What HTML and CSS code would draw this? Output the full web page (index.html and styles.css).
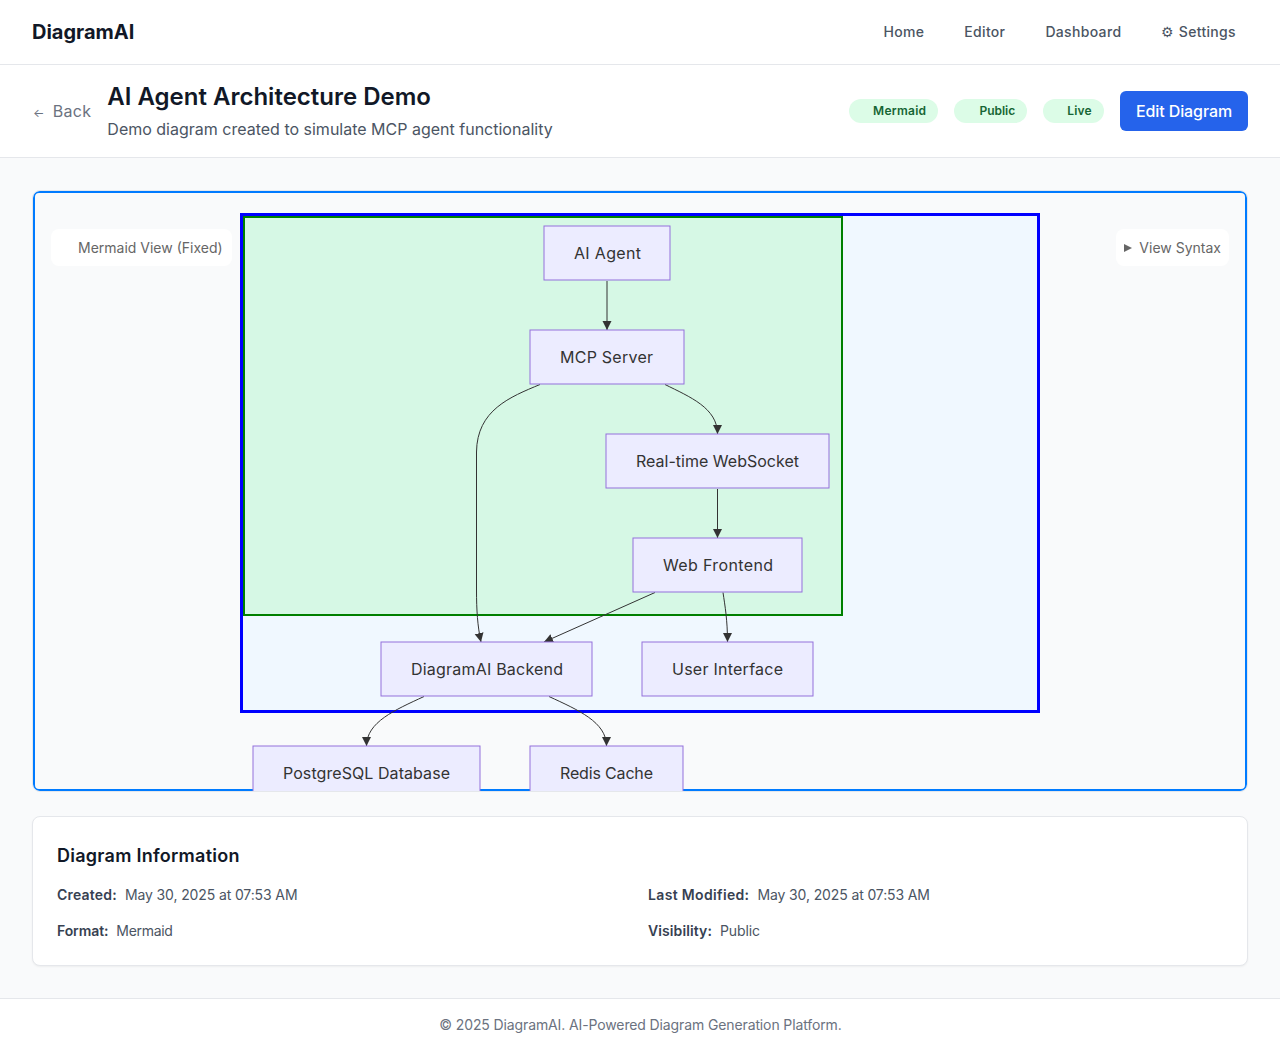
FILE: index.html
```html
<!DOCTYPE html>
<html lang="en">
<head>
<meta charset="utf-8">
<title>AI Agent Architecture Demo - DiagramAI</title>
<link rel="stylesheet" href="styles.css">
</head>
<body>
<header class="topbar">
  <a class="logo" href="#">DiagramAI</a>
  <nav class="nav">
    <a href="#">Home</a>
    <a href="#">Editor</a>
    <a href="#">Dashboard</a>
    <a href="#"><span class="gear">⚙</span> Settings</a>
  </nav>
</header>
<section class="subheader">
  <div class="title-group">
    <a class="back" href="#"><span class="arrow">←</span>Back</a>
    <div>
      <h1>AI Agent Architecture Demo</h1>
      <p>Demo diagram created to simulate MCP agent functionality</p>
    </div>
  </div>
  <div class="actions">
    <span class="badge badge-mermaid">Mermaid</span>
    <span class="badge badge-public">Public</span>
    <span class="badge badge-live">Live</span>
    <a class="edit" href="#">Edit Diagram</a>
  </div>
</section>
<main class="main">
  <section class="diagram-card">
    <div class="diagram-frame"></div>
    <svg class="diagram" viewBox="33 191 1214 600" width="1214" height="600" xmlns="http://www.w3.org/2000/svg">
      <defs>
        <marker id="tip" markerUnits="userSpaceOnUse" markerWidth="10" markerHeight="10" refX="9" refY="5" orient="auto">
          <path d="M0,0.5 L9,5 L0,9.5 Z" class="tip"/>
        </marker>
      </defs>
      <rect class="outer" x="241.5" y="214.5" width="797" height="497"/>
      <rect class="inner" x="244" y="217" width="598" height="398"/>
      <g class="edges">
        <path marker-end="url(#tip)" d="M607,281 V330"/>
        <path marker-end="url(#tip)" d="M540,384.500 C510,397 477,410 476.500,452 L476.500,590 C476.500,610 477.500,626 481,642"/>
        <path marker-end="url(#tip)" d="M665,384.500 C690,397 717.500,408 717.500,434"/>
        <path marker-end="url(#tip)" d="M717.500,489 V538"/>
        <path marker-end="url(#tip)" d="M655,592.500 L544,642"/>
        <path marker-end="url(#tip)" d="M723,592.500 C725,606 727.500,620 727.500,642"/>
        <path marker-end="url(#tip)" d="M424,696.500 C395,710 366.500,722 366.500,746"/>
        <path marker-end="url(#tip)" d="M549,696.500 C578,710 606.500,722 606.500,746"/>
      </g>
      <g class="nodes">
        <rect x="544" y="226" width="126" height="54"/>
        <rect x="530" y="330" width="154" height="54"/>
        <rect x="606" y="434" width="223" height="54"/>
        <rect x="633" y="538" width="169" height="54"/>
        <rect x="381" y="642" width="211" height="54"/>
        <rect x="642" y="642" width="171" height="54"/>
        <rect x="253" y="746" width="227" height="54"/>
        <rect x="530" y="746" width="153" height="54"/>
      </g>
      <g class="labels">
        <text x="607.500" y="259" textLength="67">AI Agent</text>
        <text x="606.500" y="363" textLength="93">MCP Server</text>
        <text x="717.500" y="467" textLength="163">Real-time WebSocket</text>
        <text x="718" y="571" textLength="110">Web Frontend</text>
        <text x="487" y="675" textLength="152">DiagramAI Backend</text>
        <text x="727.500" y="675" textLength="111">User Interface</text>
        <text x="366.500" y="779" textLength="167">PostgreSQL Database</text>
        <text x="606.500" y="779" textLength="93">Redis Cache</text>
      </g>
    </svg>
    <div class="chip chip-left">Mermaid View (Fixed)</div>
    <div class="chip chip-right"><span class="tri"></span>View Syntax</div>
  </section>
  <section class="info">
    <h2>Diagram Information</h2>
    <div class="info-grid">
      <div><strong>Created:</strong><span>May 30, 2025 at 07:53 AM</span></div>
      <div><strong class="label-wide">Last Modified:</strong><span>May 30, 2025 at 07:53 AM</span></div>
      <div><strong class="label-tight">Format:</strong><span class="value-tight">Mermaid</span></div>
      <div><strong class="label-even">Visibility:</strong><span>Public</span></div>
    </div>
  </section>
</main>
<footer class="footer">© 2025 DiagramAI. AI-Powered Diagram Generation Platform.</footer>
</body>
</html>
```
FILE: styles.css
```css
* { box-sizing: border-box; }
html, body { margin: 0; padding: 0; }
body {
  font-family: Inter, "Liberation Sans", sans-serif;
  background: #f9fafb;
  color: #111827;
  min-height: 1051px;
}
a { text-decoration: none; color: inherit; }

.topbar {
  height: 65px;
  background: #fff;
  border-bottom: 1px solid #e5e7eb;
  padding: 0 32px;
  display: flex;
  align-items: center;
  justify-content: space-between;
}
.logo { font-size: 20px; font-weight: 700; color: #111827; }
.nav { display: flex; gap: 16px; }
.nav a { padding: 8px 12px; font-size: 14px; font-weight: 500; color: #4b5563; line-height: 16px; letter-spacing: .33px; }
.gear { font-size: 14px; }

.subheader {
  height: 93px;
  background: #fff;
  border-bottom: 1px solid #e5e7eb;
  padding: 0 32px;
  display: flex;
  align-items: center;
  justify-content: space-between;
}
.title-group { display: flex; align-items: center; gap: 16px; }
.back { color: #6b7280; font-size: 16px; margin-left: 1px; letter-spacing: .3px; }
.arrow { font-size: 12px; margin-right: 8px; }
h1 { margin: 0 0 4px; font-size: 24px; line-height: 32px; font-weight: 600; color: #111827; }
.subheader p { margin: 0; font-size: 16px; line-height: 24px; color: #4b5563; }
.actions { display: flex; align-items: center; gap: 16px; }
.badge {
  height: 24px;
  padding: 0 12px 0 24px;
  border-radius: 12px;
  background: #dcfce7;
  color: #166534;
  font-size: 12px;
  font-weight: 600;
  line-height: 24px;
}
.badge-mermaid { letter-spacing: .28px; }
.badge-public { padding-left: 25px; }
.badge-live { letter-spacing: .2px; }
.edit {
  display: block;
  padding: 0 16px;
  height: 40px;
  line-height: 40px;
  border-radius: 6px;
  background: #2563eb;
  color: #fff;
  font-size: 16px;
  font-weight: 500;
  letter-spacing: -.1px;
}

.main { padding: 32px 32px; }
.diagram-card {
  position: relative;
  height: 602px;
  border: 1px solid #e5e7eb;
  border-radius: 8px;
  overflow: hidden;
  background: #f9fafb;
}
.diagram-frame {
  position: absolute;
  inset: 0;
  border: 2px solid #007bff;
  border-radius: 6px;
}
.diagram { position: absolute; left: 0; top: 0; display: block; }
.outer { fill: #f0f8ff; stroke: #0000ff; stroke-width: 3; }
.inner { fill: #d6f8e5; stroke: #008000; stroke-width: 2; }
.edges path { fill: none; stroke: #333; stroke-width: 1; }
.tip { fill: #333; stroke: none; }
.nodes rect { fill: #ececff; stroke: #9370db; stroke-width: 1; }
.labels text { font-family: Inter, "Liberation Sans", sans-serif; font-size: 16px; fill: #333; text-anchor: middle; }

.chip {
  position: absolute;
  top: 38px;
  height: 37px;
  background: #fff;
  border-radius: 8px;
  font-size: 14px;
  line-height: 37px;
  color: #666;
}
.chip-left { left: 18px; padding: 0 9px 0 27px; }
.chip-right { right: 18px; padding: 0 8px; display: flex; align-items: center; }
.tri {
  width: 0;
  height: 0;
  margin-right: 7px;
  border-left: 8px solid #666;
  border-top: 4px solid transparent;
  border-bottom: 4px solid transparent;
}

.info {
  margin-top: 24px;
  height: 150px;
  background: #fff;
  border: 1px solid #e5e7eb;
  border-radius: 8px;
  box-shadow: 0 1px 2px rgba(0,0,0,.05);
  padding: 24px;
}
h2 { margin: 1px 0 15px; font-size: 18px; line-height: 28px; font-weight: 600; color: #111827; letter-spacing: .26px; }
.info-grid { display: grid; grid-template-columns: 1fr 1fr; column-gap: 16px; row-gap: 16px; font-size: 14px; line-height: 20px; }
.info-grid strong { font-weight: 600; color: #374151; margin-right: 8px; letter-spacing: .2px; }
.info-grid .label-wide { letter-spacing: .34px; }
.info-grid .label-tight { letter-spacing: -.1px; }
.info-grid .label-even { letter-spacing: .1px; }
.info-grid span { color: #4b5563; letter-spacing: -.12px; }
.info-grid .value-tight { letter-spacing: -.3px; }

.footer {
  height: 53px;
  background: #fff;
  border-top: 1px solid #e5e7eb;
  text-align: center;
  font-size: 14px;
  line-height: 52px;
  color: #6b7280;
  letter-spacing: -.12px;
  padding-left: 1px;
}
```
